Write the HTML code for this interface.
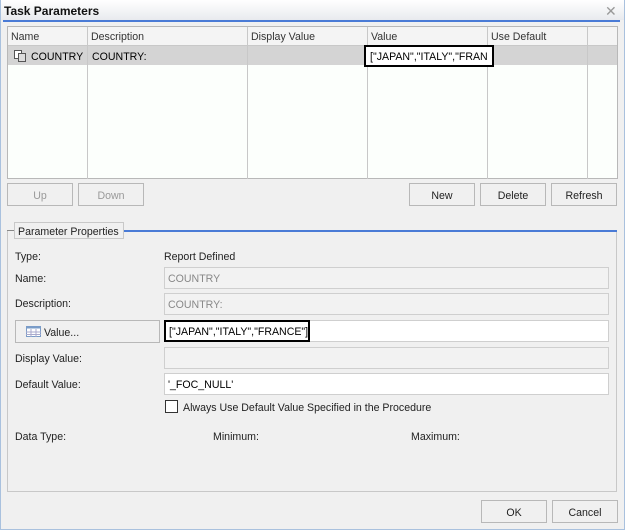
<!DOCTYPE html>
<html><head><style>
*{box-sizing:border-box;margin:0;padding:0}
body{width:625px;height:530px;background:#f0f0f0;font-family:"Liberation Sans",sans-serif;font-size:10.6px;color:#000;position:relative;overflow:hidden}
.a{position:absolute}
.outer{left:0;top:0;width:625px;height:530px;border:1px solid #a9c1de;border-top:none}
.title{left:1px;top:0;width:623px;height:20px;background:linear-gradient(#fff,#e8eaee)}
.blue{left:3px;top:20px;width:617px;height:2px;background:#4a7bd6}
.grid{left:7px;top:26px;width:611px;height:153px;background:#fcfffc;border:1px solid #b8b8b8}
.hd{top:0;height:19px;border-right:1px solid #c8c8c8;border-bottom:1px solid #c8c8c8;background:#f4f4f4;padding:4px 0 0 3px;color:#333}
.col{top:19px;height:133px;border-right:1px solid #c8c8c8}
.btn{height:23px;border:1px solid #b8b8b8;background:#f0f0f0;text-align:center;line-height:24px;color:#222}
.dis{color:#999}
.inp{height:22px;border:1px solid #cfcfcf;background:#f2f2f2;color:#888;padding:5px 3px}
.lbl{color:#222}
</style></head><body>
<div class="a outer"></div>
<div class="a title"></div>
<div class="a" style="left:4px;top:4px;font-weight:bold;font-size:12px;color:#111">Task Parameters</div>
<div class="a" style="left:605px;top:3px;font-size:14px;color:#999">✕</div>
<div class="a blue"></div>
<div class="a grid">
 <div class="a" style="left:0;top:19px;width:609px;height:19px;background:#d4d4d4"></div>
 <div class="a hd" style="left:0;width:80px">Name</div>
 <div class="a hd" style="left:80px;width:160px">Description</div>
 <div class="a hd" style="left:240px;width:120px">Display Value</div>
 <div class="a hd" style="left:360px;width:120px">Value</div>
 <div class="a hd" style="left:480px;width:100px">Use Default</div>
 <div class="a hd" style="left:580px;width:29px;border-right:none"></div>
 <div class="a col" style="left:0;width:80px"></div>
 <div class="a col" style="left:80px;width:160px"></div>
 <div class="a col" style="left:240px;width:120px"></div>
 <div class="a col" style="left:360px;width:120px"></div>
 <div class="a col" style="left:480px;width:100px"></div>
 <svg class="a" style="left:6px;top:23px" width="12" height="12"><rect x="0.5" y="0.5" width="7" height="8" fill="#fff" stroke="#555"/><rect x="4.5" y="3.5" width="7" height="8" fill="#ddd" stroke="#555"/></svg>
 <div class="a" style="left:23px;top:24px">COUNTRY</div>
 <div class="a" style="left:84px;top:24px">COUNTRY:</div>
 <div class="a" style="left:356px;top:18px;width:130px;height:22px;border:2px solid #000;background:#fff;padding:4px 0 0 4px;white-space:nowrap;overflow:hidden">["JAPAN","ITALY","FRAN</div>
</div>
<div class="a btn dis" style="left:7px;top:183px;width:66px">Up</div>
<div class="a btn dis" style="left:78px;top:183px;width:66px">Down</div>
<div class="a btn" style="left:409px;top:183px;width:66px">New</div>
<div class="a btn" style="left:480px;top:183px;width:66px">Delete</div>
<div class="a btn" style="left:551px;top:183px;width:66px">Refresh</div>

<div class="a" style="left:7px;top:230px;width:610px;height:262px;border:1px solid #c8c8c8;border-top:none"></div>
<div class="a" style="left:124px;top:230px;width:493px;height:2px;background:#4a7bd6"></div>
<div class="a" style="left:7px;top:230px;width:7px;height:1px;background:#888"></div>
<div class="a" style="left:14px;top:222px;width:110px;height:17px;border:1px solid #c8c8c8;background:#f0f0f0;padding:3px 0 0 3px;color:#222">Parameter Properties</div>

<div class="a lbl" style="left:15px;top:251px">Type:</div>
<div class="a lbl" style="left:164px;top:251px">Report Defined</div>
<div class="a lbl" style="left:15px;top:273px">Name:</div>
<div class="a inp" style="left:164px;top:267px;width:445px">COUNTRY</div>
<div class="a lbl" style="left:15px;top:298px">Description:</div>
<div class="a inp" style="left:164px;top:293px;width:445px">COUNTRY:</div>
<div class="a btn" style="left:15px;top:320px;width:145px;height:23px;text-align:left;padding-left:28px">Value...</div>
<svg class="a" style="left:26px;top:326px" width="15" height="11"><rect x="0.5" y="0.5" width="14" height="10" fill="#fff" stroke="#7a9cc8"/><rect x="0.5" y="0.5" width="14" height="2" fill="#7a9cc8"/><path d="M5 3v8M10 3v8M0 6h15M0 8.5h15" stroke="#aac" /></svg>
<div class="a" style="left:164px;top:320px;width:445px;height:22px;border:1px solid #cfcfcf;background:#fff"></div>
<div class="a" style="left:164px;top:320px;width:146px;height:22px;border:2px solid #000;background:#fff;padding:4px 0 0 3px;white-space:nowrap;overflow:hidden">["JAPAN","ITALY","FRANCE"]</div>
<div class="a lbl" style="left:15px;top:353px">Display Value:</div>
<div class="a inp" style="left:164px;top:347px;width:445px"></div>
<div class="a lbl" style="left:15px;top:379px">Default Value:</div>
<div class="a inp" style="left:164px;top:373px;width:445px;background:#fff;color:#000">'_FOC_NULL'</div>
<div class="a" style="left:165px;top:400px;width:13px;height:13px;border:1px solid #333;background:#fff"></div>
<div class="a lbl" style="left:183px;top:402px">Always Use Default Value Specified in the Procedure</div>
<div class="a lbl" style="left:15px;top:431px">Data Type:</div>
<div class="a lbl" style="left:213px;top:431px">Minimum:</div>
<div class="a lbl" style="left:411px;top:431px">Maximum:</div>
<div class="a btn" style="left:481px;top:500px;width:66px">OK</div>
<div class="a btn" style="left:552px;top:500px;width:66px">Cancel</div>
</body></html>
